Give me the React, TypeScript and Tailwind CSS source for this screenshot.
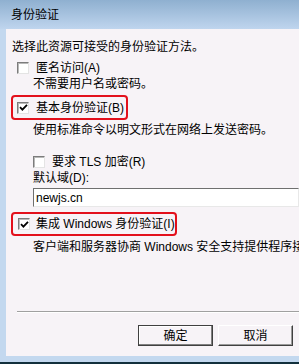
import React from "react";

const font = { fontFamily: '"Liberation Sans", "Noto Sans CJK SC", sans-serif' };

const Check = ({ checked }: { checked?: boolean }) => (
  <span className="w-[12px] h-[12px] shrink-0 bg-white border border-t-[#7c7c7c] border-l-[#7c7c7c] border-r-[#e4e4e4] border-b-[#e4e4e4] shadow-[inset_1px_1px_0_#b8b8b8] flex items-center justify-center">
    {checked && (
      <svg width="9" height="9" viewBox="0 0 9 9">
        <path d="M1 4.2 L3.4 6.6 L8 1.8" fill="none" stroke="#000" strokeWidth="1.8" />
      </svg>
    )}
  </span>
);

const App = () => {
  return (
    <div
      className="w-[299px] h-[364px] overflow-hidden flex flex-col bg-[#f7f3f7] text-[12px] leading-[16px] text-black"
      style={font}
    >
      {/* Title bar */}
      <div className="h-[29px] shrink-0 bg-gradient-to-b from-[#8fb0d0] to-[#bfd5ee] flex items-center pl-[11px] pt-[1px]">
        身份验证
      </div>

      <div className="flex flex-1 min-h-0">
        <div className="w-[6px] shrink-0 bg-[#c3d8ef]" />
        <div className="flex-1 min-w-0 overflow-hidden flex flex-col pt-[10px] whitespace-nowrap">
          <div className="h-[16px] pl-[6px]">选择此资源可接受的身份验证方法。</div>

          <div className="h-[16px] mt-[5px] pl-[11px] flex items-center gap-[7px]">
            <Check />
            <span>匿名访问(A)</span>
          </div>
          <div className="h-[16px] pl-[27px]">不需要用户名或密码。</div>

          <div className="mt-[3px] ml-[5px] w-[117px] h-[25px] border-2 border-[#e3101c] rounded-[4px] flex items-center pl-[4px] gap-[7px]">
            <Check checked />
            <span>基本身份验证(B)</span>
          </div>
          <div className="h-[16px] mt-[2px] pl-[27px]">使用标准命令以明文形式在网络上发送密码。</div>

          <div className="h-[16px] mt-[16px] pl-[27px] flex items-center gap-[7px]">
            <Check />
            <span>要求 TLS 加密(R)</span>
          </div>
          <div className="h-[16px] pl-[27px]">默认域(D):</div>
          <div className="ml-[27px] mt-[2px] h-[19px] bg-white border border-t-[#6f6f6f] border-l-[#6f6f6f] border-r-[#e8e8e8] border-b-[#e8e8e8] flex items-center pl-[2px]">
            newjs.cn
          </div>

          <div className="mt-[5px] ml-[5px] w-[166px] h-[24px] border-2 border-[#e3101c] rounded-[4px] flex items-center pl-[5px] gap-[6px]">
            <Check checked />
            <span>集成 Windows 身份验证(I)</span>
          </div>
          <div className="h-[16px] mt-[3px] pl-[27px]">客户端和服务器协商 Windows 安全支持提供程序接口</div>

          <div className="mt-[56px] ml-[11px] h-[2px] border-t border-t-[#a0a0a0] border-b border-b-white" />

          <div className="mt-[12px] flex gap-[5px] pl-[132px]">
            <button className="w-[75px] h-[21px] shrink-0 bg-[#f7f3f7] border border-[#404040] shadow-[inset_-1px_-1px_0_#808080,inset_1px_1px_0_#ffffff] flex items-center justify-center">
              确定
            </button>
            <button className="w-[75px] h-[21px] shrink-0 bg-[#f7f3f7] border border-t-white border-l-white border-r-[#404040] border-b-[#404040] shadow-[inset_-1px_-1px_0_#9a9a9a] flex items-center justify-center">
              取消
            </button>
          </div>
        </div>
      </div>

      <div className="h-[6px] shrink-0 bg-[#c3d8ef]" />
      <div className="h-[2px] shrink-0 bg-[#12303c]" />
    </div>
  );
};

export default App;
